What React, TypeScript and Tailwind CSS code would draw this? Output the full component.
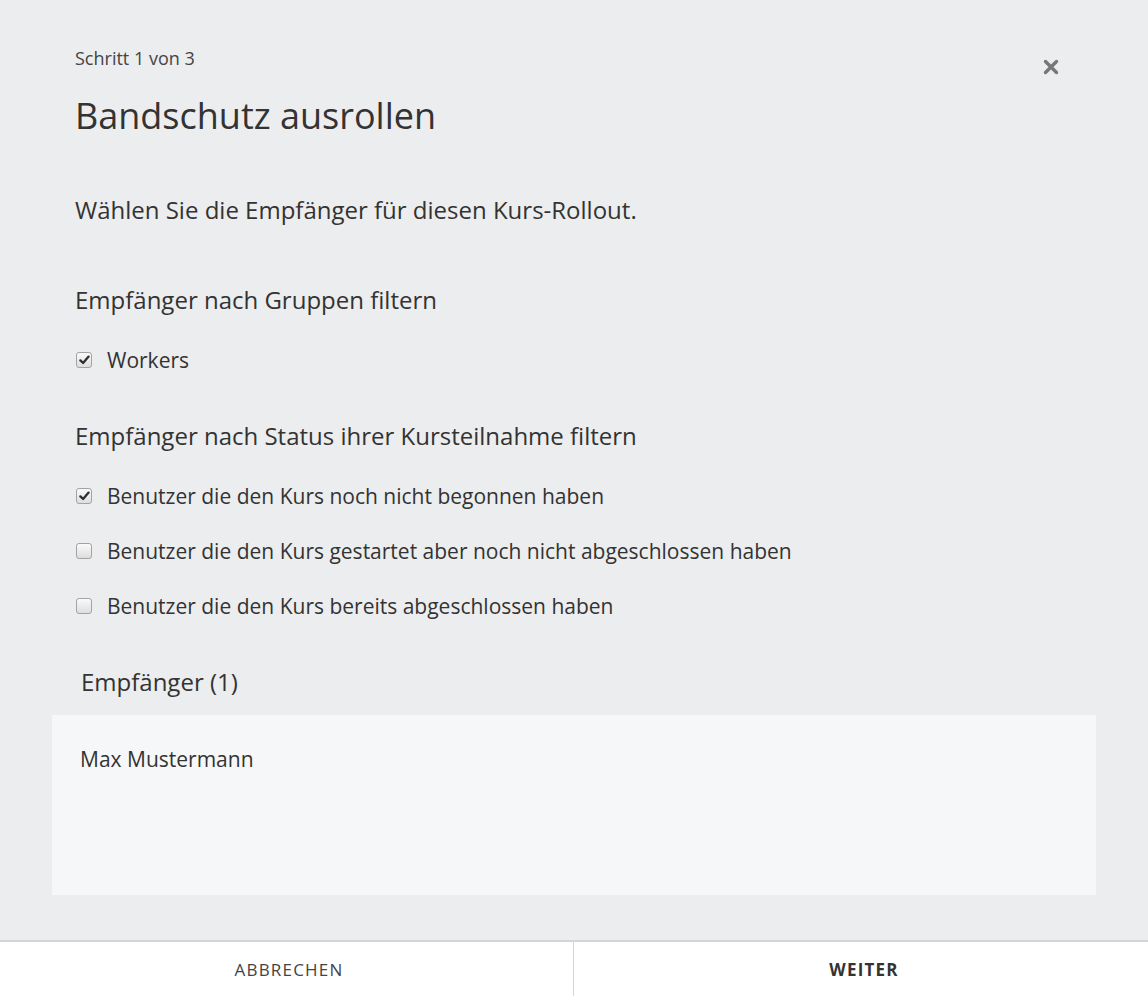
export default function App() {
  const Box = ({ checked }: { checked?: boolean }) => (
    <span className="flex h-[16px] w-[16px] shrink-0 items-center justify-center rounded-[3px] border border-[#a3a3a3] bg-gradient-to-b from-[#fafafa] to-[#dedede]">
      {checked && (
        <svg width="11" height="10" viewBox="0 0 11 10" fill="none">
          <path d="M1.4 5.4 L4.1 8 L9.6 1.6" stroke="#2f2f2f" strokeWidth="2.3" strokeLinecap="round" strokeLinejoin="round" />
        </svg>
      )}
    </span>
  );

  const Row = ({ label, checked, mt }: { label: string; checked?: boolean; mt: string }) => (
    <label className={`flex h-[30px] items-center gap-[15px] pl-[1px] ${mt}`}>
      <Box checked={checked} />
      <span className="text-[21px] leading-[30px]">{label}</span>
    </label>
  );

  return (
    <main
      className="flex min-h-[996px] flex-col bg-[#ecedef] text-[#333]"
      style={{ fontFamily: '"Open Sans", "Liberation Sans", sans-serif' }}
    >
      <div className="relative flex-1 px-[75px] pt-[46px] pb-[45px]">
        <button className="absolute right-[89px] top-[59px] text-[#777]" aria-label="Schließen">
          <svg width="16" height="16" viewBox="0 0 16 16">
            <path d="M2.5 2.5 L13.5 13.5 M13.5 2.5 L2.5 13.5" stroke="currentColor" strokeWidth="3.4" strokeLinecap="round" />
          </svg>
        </button>

        <p className="text-[18px] leading-[24px] text-[#444]">Schritt 1 von 3</p>
        <h1 className="mt-[22px] text-[36px] leading-[48px]">Bandschutz ausrollen</h1>
        <p className="mt-[55px] text-[24px] leading-[30px]">Wählen Sie die Empfänger für diesen Kurs-Rollout.</p>

        <h2 className="mt-[60px] text-[24px] leading-[30px]">Empfänger nach Gruppen filtern</h2>
        <Row label="Workers" checked mt="mt-[30px]" />

        <h2 className="mt-[46px] text-[24px] leading-[30px]">Empfänger nach Status ihrer Kursteilnahme filtern</h2>
        <Row label="Benutzer die den Kurs noch nicht begonnen haben" checked mt="mt-[30px]" />
        <Row label="Benutzer die den Kurs gestartet aber noch nicht abgeschlossen haben" mt="mt-[25px]" />
        <Row label="Benutzer die den Kurs bereits abgeschlossen haben" mt="mt-[25px]" />

        <h3 className="ml-[6px] mt-[46px] text-[24px] leading-[30px]">Empfänger (1)</h3>
        <div className="-mx-[23px] mt-[18px] h-[180px] bg-[#f6f7f9] pl-[28px] pt-[29px]">
          <p className="text-[21px] leading-[30px]">Max Mustermann</p>
        </div>
      </div>

      <footer className="grid h-[56px] grid-cols-2 border-t-2 border-[#d4d5d7] bg-white">
        <button className="border-r border-[#d4d5d7] pl-[5px] pt-[2px] text-[17px] tracking-[0.07em] text-[#444]">ABBRECHEN</button>
        <button className="pl-[6px] pt-[2px] text-[17px] font-bold tracking-[0.07em] text-[#333]">WEITER</button>
      </footer>
    </main>
  );
}
